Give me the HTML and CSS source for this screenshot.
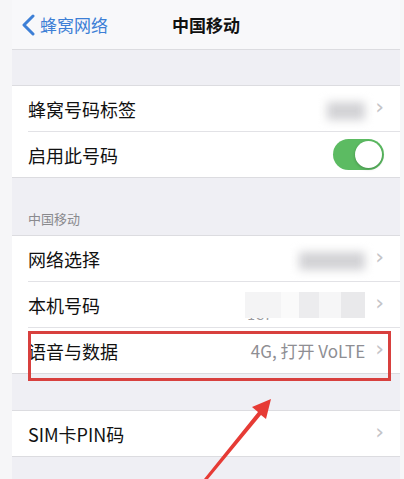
FILE: index.html
```html
<!DOCTYPE html>
<html lang="zh-CN">
<head>
    <meta charset="UTF-8">
    <meta name="viewport" content="width=device-width, initial-scale=1.0">
    <title>中国移动</title>
    <link rel="stylesheet" href="styles.css">
</head>
<body>
    <div class="screen">
        <!-- top navigation -->
        <div class="navbar">
            <div class="back">
                <svg class="back-icon" width="13" height="22" viewBox="0 0 13 22">
                    <path d="M11 2 L2 11 L11 20" fill="none" stroke="#3d7fd6" stroke-width="3" stroke-linecap="round" stroke-linejoin="round"/>
                </svg>
                <span>蜂窝网络</span>
            </div>
            <div class="title">中国移动</div>
        </div>

        <div class="gap"></div>

        <div class="group">
            <div class="row">
                <span class="label">蜂窝号码标签</span>
                <span class="value"><span class="blur short"></span></span>
                <span class="chevron">&#8250;</span>
            </div>
            <div class="row">
                <span class="label">启用此号码</span>
                <span class="toggle"><span class="knob"></span></span>
            </div>
        </div>

        <div class="section-title">中国移动</div>

        <div class="group">
            <div class="row">
                <span class="label">网络选择</span>
                <span class="value"><span class="blur long"></span></span>
                <span class="chevron">&#8250;</span>
            </div>
            <div class="row">
                <span class="label">本机号码</span>
                <span class="value masked">
                    <span class="peek">1C7</span>
                    <span class="cover"></span>
                </span>
                <span class="chevron">&#8250;</span>
            </div>
            <div class="row">
                <span class="label">语音与数据</span>
                <span class="value">4G, 打开 VoLTE</span>
                <span class="chevron">&#8250;</span>
            </div>
        </div>

        <div class="gap tall"></div>

        <div class="group">
            <div class="row">
                <span class="label">SIM卡PIN码</span>
                <span class="value"></span>
                <span class="chevron">&#8250;</span>
            </div>
        </div>

        <!-- annotation marks over the screenshot -->
        <div class="highlight"></div>
        <svg class="arrow" width="404" height="479" viewBox="0 0 404 479">
            <path d="M204 479 L258 412 L252 407 L271 399 L266 419 L261 415 L208 479 Z" fill="#e63b35"/>
        </svg>
    </div>
</body>
</html>
```

FILE: styles.css
```css
body {
    margin: 0;
    padding: 0;
    background-color: #f6f6f8;
    font-family: "Noto Sans CJK SC", "Noto Sans", sans-serif;
}

.screen {
    position: relative;
    width: 388px;
    height: 479px;
    margin-left: 12px;
    background-color: #efeff4;
    overflow: hidden;
}

.navbar {
    position: relative;
    display: flex;
    align-items: center;
    justify-content: center;
    height: 49px;
    background-color: #f8f8fa;
    border-bottom: 1px solid #dcdce0;
}

.back {
    position: absolute;
    left: 10px;
    top: 0;
    height: 49px;
    display: flex;
    align-items: center;
    gap: 5px;
    color: #3d7fd6;
    font-size: 17px;
}

.title {
    font-size: 17px;
    font-weight: 600;
    color: #111;
}

.gap {
    height: 35px;
}

.gap.tall {
    height: 36px;
}

.group {
    background-color: #fff;
    border-top: 1px solid #dcdce0;
    border-bottom: 1px solid #dcdce0;
    padding-left: 16px;
}

.row {
    display: flex;
    align-items: center;
    height: 45px;
    padding-right: 16px;
    border-bottom: 1px solid #e2e2e6;
}

.row:last-child {
    border-bottom: none;
}

.label {
    flex: 1;
    font-size: 18px;
    color: #111;
}

.value {
    font-size: 17px;
    color: #8e8e93;
    margin-right: 10px;
}

.chevron {
    font-family: "DejaVu Sans", sans-serif;
    font-size: 22px;
    color: #c4c4c8;
    line-height: 1;
    margin-top: -3px;
}

.blur {
    display: inline-block;
    height: 18px;
    background-color: #d2d2d5;
    filter: blur(5px);
    vertical-align: middle;
}

.blur.short {
    width: 38px;
}

.blur.long {
    width: 66px;
}

.masked {
    position: relative;
    width: 120px;
    height: 30px;
}

.peek {
    position: absolute;
    left: 2px;
    bottom: -4px;
    font-size: 14px;
    color: #9a9a9e;
}

.cover {
    position: absolute;
    left: 0;
    top: 2px;
    width: 120px;
    height: 26px;
    background: linear-gradient(90deg, #f4f4f5 0 30%, #fafafa 30% 45%, #ececee 45% 62%, #f6f6f7 62% 80%, #e9e9eb 80% 100%);
}

.toggle {
    position: relative;
    width: 51px;
    height: 31px;
    border-radius: 16px;
    background-color: #5cbb62;
}

.knob {
    position: absolute;
    right: 2px;
    top: 2px;
    width: 27px;
    height: 27px;
    border-radius: 50%;
    background-color: #fff;
    box-shadow: 0 1px 3px rgba(0, 0, 0, 0.25);
}

.section-title {
    height: 57px;
    box-sizing: border-box;
    padding: 31px 0 0 16px;
    font-size: 13px;
    color: #8a8a8e;
}

.highlight {
    position: absolute;
    left: 16px;
    top: 331px;
    width: 357px;
    height: 44px;
    border: 3px solid #d8403e;
}

.arrow {
    position: absolute;
    left: -12px;
    top: 0;
}
```
